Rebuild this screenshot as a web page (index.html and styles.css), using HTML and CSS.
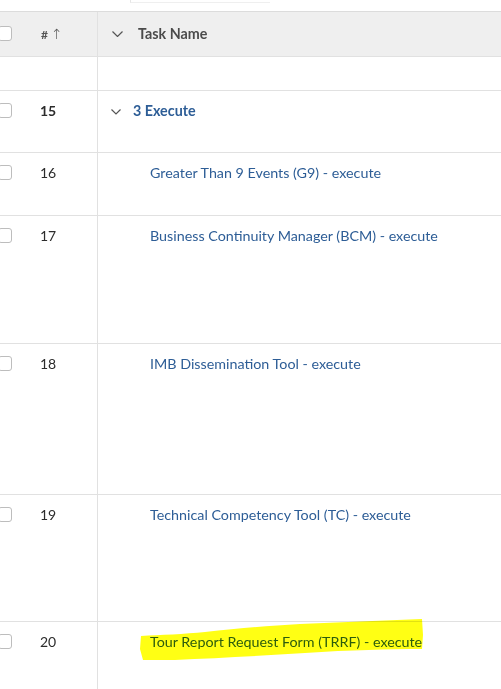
FILE: index.html
```html
<!DOCTYPE html>
<html>
<head>
<meta charset="utf-8">
<link rel="stylesheet" href="styles.css">
</head>
<body>
<div class="top"><div class="topbox"></div></div>
<div class="table">
  <div class="row head">
    <div class="left"><span class="cb"></span><span class="num hnum"><b>#</b> <span class="arrow">&#8593;</span></span></div>
    <div class="name"><svg class="chev" width="11" height="6" viewBox="0 0 11 6"><path d="M0.5 0.5 L5.5 5.5 L10.5 0.5" fill="none" stroke="#555" stroke-width="1.2"/></svg><span class="htext">Task Name</span></div>
  </div>
  <div class="row empty">
    <div class="left"></div>
    <div class="name"></div>
  </div>
  <div class="row r15">
    <div class="left"><span class="cb"></span><span class="num bold">15</span></div>
    <div class="name parent"><svg class="chev" width="10" height="6" viewBox="0 0 10 6"><path d="M0.5 0.5 L5 5 L9.5 0.5" fill="none" stroke="#555" stroke-width="1.2"/></svg><span class="link bold">3 Execute</span></div>
  </div>
  <div class="row r16">
    <div class="left"><span class="cb"></span><span class="num">16</span></div>
    <div class="name child"><span class="link">Greater Than 9 Events (G9) - execute</span></div>
  </div>
  <div class="row r17">
    <div class="left"><span class="cb"></span><span class="num">17</span></div>
    <div class="name child"><span class="link">Business Continuity Manager (BCM) - execute</span></div>
  </div>
  <div class="row r18">
    <div class="left"><span class="cb"></span><span class="num">18</span></div>
    <div class="name child"><span class="link">IMB Dissemination Tool - execute</span></div>
  </div>
  <div class="row r19">
    <div class="left"><span class="cb"></span><span class="num">19</span></div>
    <div class="name child"><span class="link">Technical Competency Tool (TC) - execute</span></div>
  </div>
  <div class="row r20">
    <div class="left"><span class="cb"></span><span class="num">20</span></div>
    <div class="name child"><span class="link">Tour Report Request Form (TRRF) - execute</span></div>
    <svg class="hl" width="501" height="80" viewBox="0 613 501 80"><path d="M141 637 C160 636 185 635 205 633 C240 629 270 627 300 625 C340 623 380 622 422 620 L423 636 L422 650 C390 650 350 651 305 654 C260 657 215 659 175 661 L143 661 L140 650 Z" fill="#ffff14"/></svg>
  </div>
</div>
</body>
</html>
```
FILE: styles.css
```css
* { box-sizing: border-box; }
html, body { margin: 0; padding: 0; background: #fff; }
body {
  width: 501px;
  height: 689px;
  overflow: hidden;
  font-family: Lato, "Noto Sans", sans-serif;
  font-size: 14px;
  color: #2c2c2c;
}
.top {
  height: 11px;
  padding-left: 130px;
}
.topbox {
  width: 140px;
  height: 3px;
  border-left: 1px solid #e6e6e6;
  border-bottom: 1px solid #efefef;
}
.table {
  border-top: 1px solid #dcdcdc;
}
.row {
  display: flex;
  border-bottom: 1px solid #e1e1e1;
  position: relative;
}
.left {
  width: 98px;
  flex: none;
  border-right: 1px solid #e1e1e1;
  display: flex;
  align-items: flex-start;
  padding-top: 11px;
  line-height: 18px;
}
.name {
  flex: 1;
  display: flex;
  align-items: flex-start;
  padding-top: 11px;
  line-height: 18px;
}
.head { height: 45px; background: #efefef; }
.head .left, .head .name { padding-top: 13px; }
.empty { height: 34px; }
.r15 { height: 62px; }
.r16 { height: 63px; }
.r17 { height: 128px; }
.r18 { height: 151px; }
.r19 { height: 127px; }
.r20 { height: 70px; border-bottom: none; }
.cb {
  width: 14px;
  height: 15px;
  margin-top: 1px;
  margin-left: -2px;
  border: 1.5px solid #bdbdbd;
  border-radius: 3px;
  background: #fff;
  flex: none;
}
.num {
  margin-left: 28px;
  color: #2c2c2c;
}
.hnum {
  font-size: 12px;
  color: #555;
  margin-left: 29px;
}
.hnum b { font-weight: 700; }
.arrow { font-family: "DejaVu Sans", sans-serif; font-size: 14px; font-weight: 300; }
.bold { font-weight: 700; }
.chev { flex: none; margin-top: 6px; }
.head .chev { margin-left: 14px; margin-right: 15px; margin-top: 6px; }
.htext { font-weight: 700; color: #4b4b4b; font-size: 14.3px; }
.parent .chev { margin-left: 13px; margin-right: 12px; margin-top: 7px; }
.link { color: #2d5d96; font-size: 14.3px; }
.child { padding-left: 52px; }
.hl {
  position: absolute;
  left: 0;
  top: -10px;
  mix-blend-mode: multiply;
  pointer-events: none;
}
```
